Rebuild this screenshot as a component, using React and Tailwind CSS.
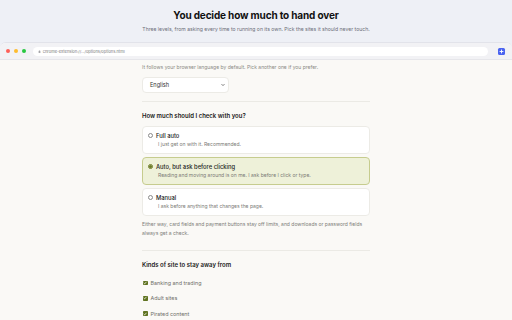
import React from "react";

function Radio({ checked }) {
  return checked ? (
    <span className="w-[5px] h-[5px] rounded-full border-[1px] border-[#6b7b24] bg-white flex items-center justify-center shrink-0">
      <span className="w-[2.5px] h-[2.5px] rounded-full bg-[#6b7b24]" />
    </span>
  ) : (
    <span className="w-[5px] h-[5px] rounded-full border-[0.8px] border-[#8a8a8a] bg-white shrink-0" />
  );
}

function Card({ title, sub, selected }) {
  return (
    <div
      className={
        "h-[28px] rounded-[4px] border-[0.8px] px-[5px] pt-[5px] " +
        (selected ? "bg-[#eef1d9] border-[#c6cc8e]" : "bg-white border-[#ecebe6]")
      }
    >
      <div className="flex items-center gap-[3px] h-[7px]">
        <Radio checked={selected} />
        <span className="text-[5.8px] leading-[7px] font-medium text-[#1c1c1c]">{title}</span>
      </div>
      <div className="mt-[2px] pl-[10px] text-[5px] leading-[7px] text-[#7a7a75]">{sub}</div>
    </div>
  );
}

function Check({ label }) {
  return (
    <div className="flex items-center gap-[3px] h-[8px]">
      <span className="w-[4.5px] h-[4.5px] rounded-[0.8px] bg-[#5f7320] flex items-center justify-center ml-[1px]">
        <svg viewBox="0 0 10 10" className="w-[4px] h-[4px]">
          <path d="M2 5.2 L4.2 7.3 L8 2.8" fill="none" stroke="white" strokeWidth="1.8" strokeLinecap="round" strokeLinejoin="round" />
        </svg>
      </span>
      <span className="text-[5.4px] leading-[8px] text-[#6f6f6a]">{label}</span>
    </div>
  );
}

export default function App() {
  return (
    <div
      className="w-[512px] h-[320px] overflow-hidden bg-[#eef0f6] flex flex-col"
      style={{ fontFamily: "Inter, 'Noto Sans', sans-serif" }}
    >
      <div className="h-[42px] flex flex-col items-center shrink-0">
        <div className="mt-[9px] text-[10px] leading-[13px] font-bold text-[#111] tracking-[-0.15px]">
          You decide how much to hand over
        </div>
        <div className="mt-[3px] text-[5.1px] leading-[8px] text-[#6c6e78]">
          Three levels, from asking every time to running on its own. Pick the sites it should never touch.
        </div>
      </div>
      <div className="flex-1 flex flex-col rounded-t-[6px] overflow-hidden border-t border-[#e2e3ea] bg-[#faf9f6]">
        <div className="h-[17px] shrink-0 bg-[#f2f2f5] border-b border-[#e6e6ea] flex items-center pl-[6px] pr-[7px]">
          <div className="flex items-center gap-[4.3px]">
            <span className="w-[3.7px] h-[3.7px] rounded-full bg-[#fe5f57]" />
            <span className="w-[3.7px] h-[3.7px] rounded-full bg-[#febc2e]" />
            <span className="w-[3.7px] h-[3.7px] rounded-full bg-[#28c840]" />
          </div>
          <div className="ml-[7px] w-[455px] h-[9px] rounded-full bg-white flex items-center pl-[5px] gap-[2px]">
            <svg viewBox="0 0 10 10" className="w-[3px] h-[3px]">
              <rect x="2" y="4.5" width="6" height="5" rx="1" fill="#8a8a90" />
              <path d="M3.5 4.5 V3.2 a1.5 1.5 0 0 1 3 0 V4.5" fill="none" stroke="#8a8a90" strokeWidth="1.2" />
            </svg>
            <span className="text-[4px] leading-[5px] text-[#777]">chrome-extension://.../options/options.html</span>
          </div>
          <div className="ml-auto w-[7px] h-[7px] rounded-[1.5px] bg-[#4a63f0] flex items-center justify-center">
            <svg viewBox="0 0 10 10" className="w-[5px] h-[5px]">
              <path d="M5 2 V8 M2 5 H8" stroke="white" strokeWidth="1.8" strokeLinecap="round" />
            </svg>
          </div>
        </div>
        <div className="w-[228px] mx-auto flex flex-col pt-[4px]">
          <div className="text-[5px] leading-[7px] text-[#8a8a85]">
            It follows your browser language by default. Pick another one if you prefer.
          </div>
          <div className="mt-[6px] w-[87px] h-[16px] rounded-[4px] bg-white border-[0.8px] border-[#ecebe6] flex items-center pl-[7px] pr-[3px]">
            <span className="text-[5.6px] text-[#333]">English</span>
            <svg viewBox="0 0 10 10" className="ml-auto w-[4px] h-[4px]">
              <path d="M2 3.5 L5 6.5 L8 3.5" fill="none" stroke="#333" strokeWidth="1.6" strokeLinecap="round" strokeLinejoin="round" />
            </svg>
          </div>
          <div className="mt-[8px] h-px bg-[#ebeae5]" />
          <div className="mt-[10px] text-[6px] leading-[8px] font-semibold text-[#1a1a1a]">
            How much should I check with you?
          </div>
          <div className="mt-[6px] flex flex-col gap-[3px]">
            <Card title="Full auto" sub="I just get on with it. Recommended." />
            <Card selected title="Auto, but ask before clicking" sub="Reading and moving around is on me. I ask before I click or type." />
            <Card title="Manual" sub="I ask before anything that changes the page." />
          </div>
          <div className="mt-[4px] text-[5px] leading-[8.6px] text-[#7d7d78]">
            Either way, card fields and payment buttons stay off limits, and downloads or password fields always get a check.
          </div>
          <div className="mt-[13px] h-px bg-[#ebeae5]" />
          <div className="mt-[10px] text-[6px] leading-[8px] font-semibold text-[#1a1a1a]">
            Kinds of site to stay away from
          </div>
          <div className="mt-[10px] flex flex-col gap-[7.2px]">
            <Check label="Banking and trading" />
            <Check label="Adult sites" />
            <Check label="Pirated content" />
          </div>
        </div>
      </div>
    </div>
  );
}
